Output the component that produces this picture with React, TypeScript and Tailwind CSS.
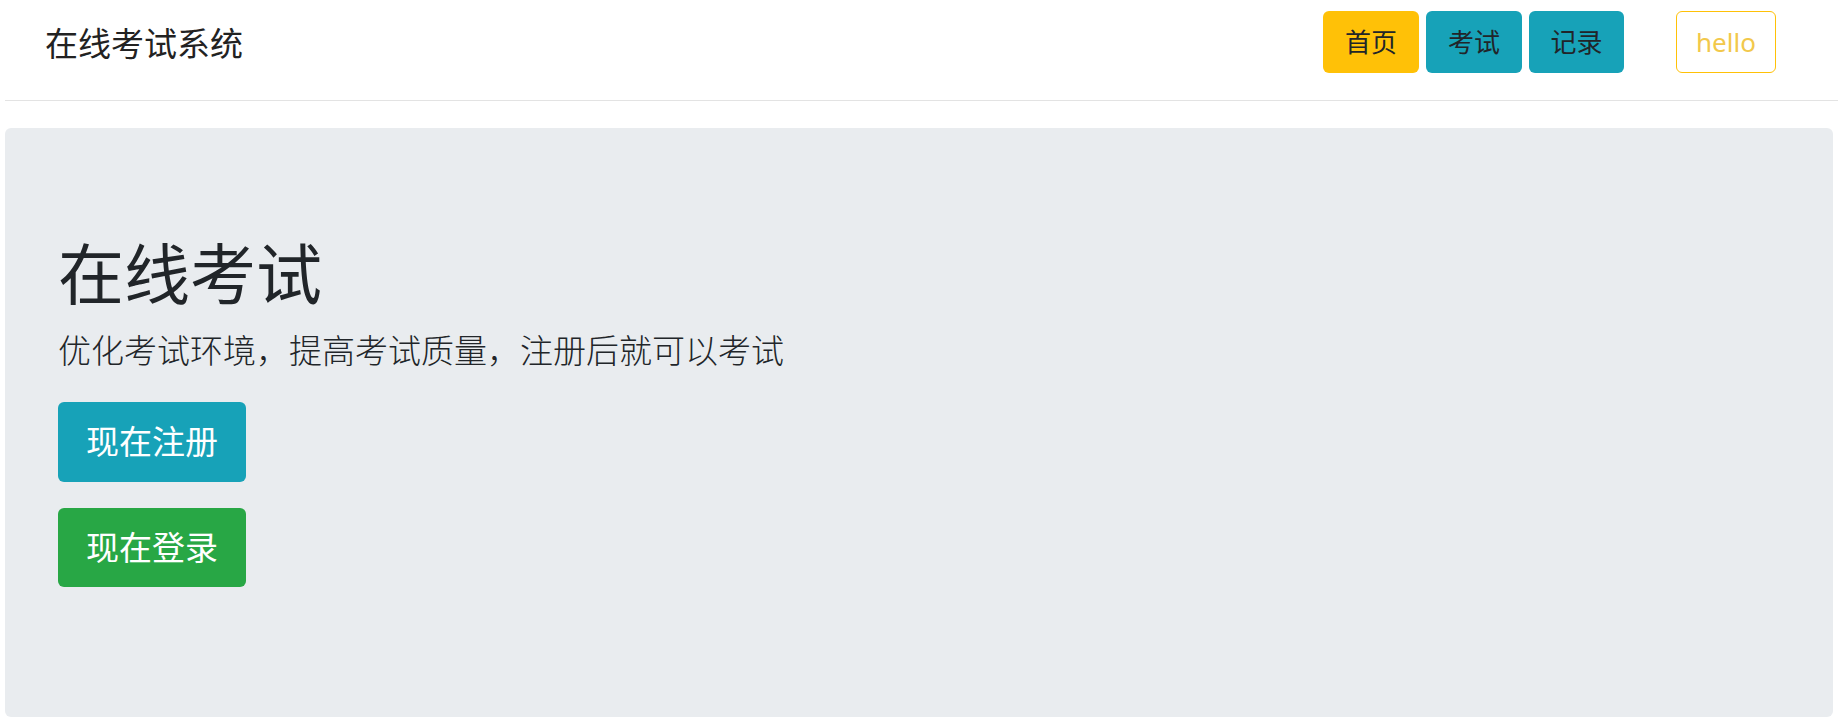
import React from "react";

const font = {
  fontFamily:
    '"Noto Sans", "Noto Sans CJK SC", "Microsoft YaHei", sans-serif',
};

export default function App() {
  return (
    <div className="w-[1838px] h-[721px] bg-white overflow-hidden text-[#212529]" style={font}>
      <nav className="ml-[5px] h-[101px] border-b border-[#e3e3e3] flex items-start pt-[11px]">
        <div className="h-[62px] flex items-center pl-[40px] mt-[2px] text-[33px] leading-[1.5] text-[#222]">
          在线考试系统
        </div>
        <div className="ml-auto flex items-center gap-[7px] mr-[62px]">
          <button className="w-[96px] h-[62px] rounded-[6px] bg-[#ffc107] text-[26px] leading-none text-[#212529]">
            首页
          </button>
          <button className="w-[96px] h-[62px] rounded-[6px] bg-[#17a2b8] text-[26px] leading-none text-[#212529]">
            考试
          </button>
          <button className="w-[95px] h-[62px] rounded-[6px] bg-[#17a2b8] text-[26px] leading-none text-[#212529]">
            记录
          </button>
          <button className="ml-[45px] w-[100px] h-[62px] rounded-[6px] border border-[#ffc107] bg-white text-[26px] leading-none text-[#f2c84b]">
            hello
          </button>
        </div>
      </nav>
      <div className="mt-[27px] ml-[5px] w-[1828px] h-[589px] rounded-[6px] bg-[#e9ecef] pt-[106px] pl-[53px]">
        <h1 className="text-[66px] leading-[1.2] font-normal mb-[13px] text-[#212529]">在线考试</h1>
        <p className="text-[33px] leading-[1.5] font-light mb-[26px] text-[#212529]">
          优化考试环境，提高考试质量，注册后就可以考试
        </p>
        <div className="flex flex-col items-start gap-[26px]">
          <button className="w-[188px] h-[80px] rounded-[6px] bg-[#17a2b8] text-white text-[33px] leading-none">
            现在注册
          </button>
          <button className="w-[188px] h-[79px] rounded-[6px] bg-[#28a745] text-white text-[33px] leading-none">
            现在登录
          </button>
        </div>
      </div>
    </div>
  );
}
